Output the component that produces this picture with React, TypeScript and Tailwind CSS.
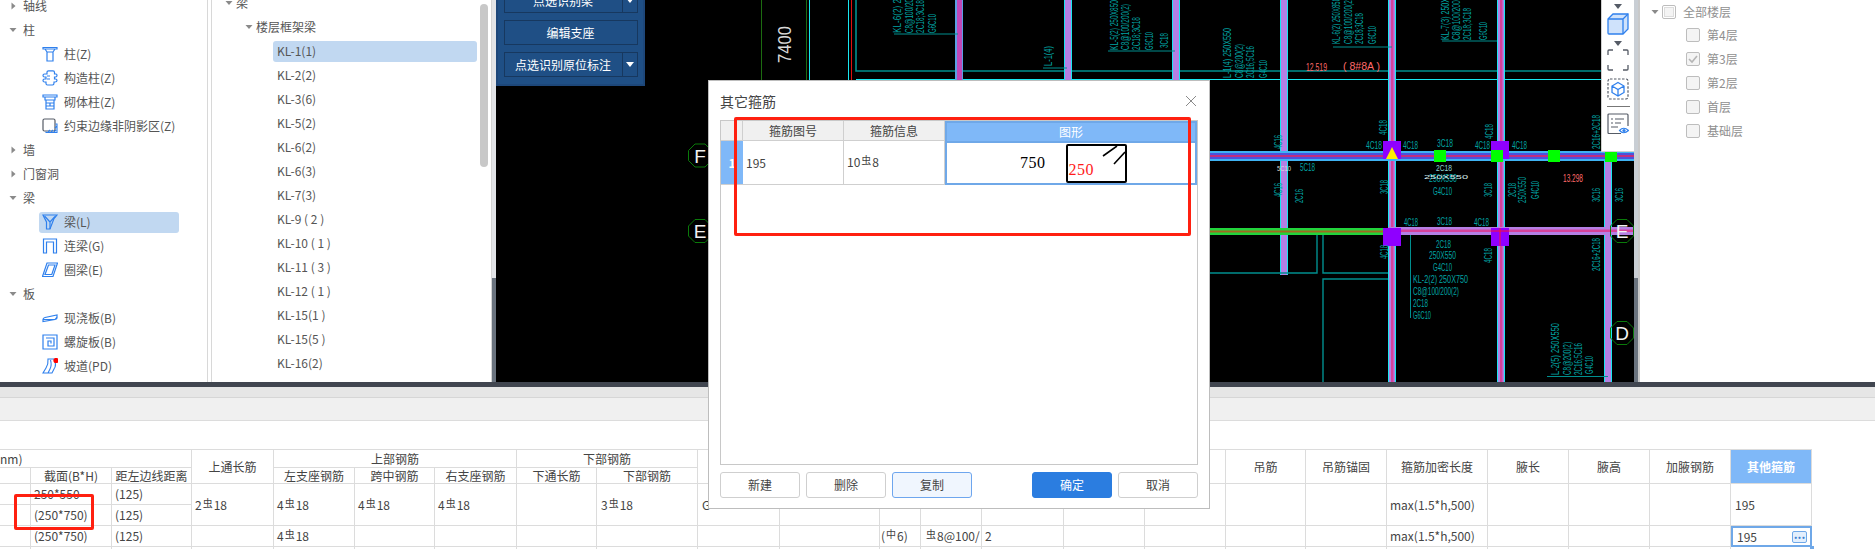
import type { ReactNode } from "react";

const TEAL = "#00a3a3";
const DARK_TEAL = "#008f8f";
const CYAN = "#19e6f0";

function Caret({ open }: { open?: boolean }) {
  return (
    <svg width="8" height="8" viewBox="0 0 8 8" className="shrink-0">
      {open ? (
        <path d="M0.5 2 H7.5 L4 6 Z" fill="#8a8a8a" />
      ) : (
        <path d="M2.5 0.5 L6.5 4 L2.5 7.5 Z" fill="#8a8a8a" />
      )}
    </svg>
  );
}

const ink = { fill: "none", stroke: "#2f80ed", strokeWidth: 1.2 };

function ColumnIcon() {
  return (
    <svg width="16" height="16" viewBox="0 0 16 16" {...ink}>
      <path d="M1 1.5 H15 V3 H1 Z M3 3 L5 6 H11 L13 3 M5 6 V15 H11 V6" />
    </svg>
  );
}
function GzzIcon() {
  return (
    <svg width="16" height="16" viewBox="0 0 16 16" {...ink}>
      <path d="M5 2 Q5 .8 6.5 .8 H11 Q12.5 .8 12.5 2.5 V4 H14 Q15 4 15 5.5 Q15 7 13.5 7 H12.5 V9 H13.5 Q15 9 15 10.5 Q15 12 13 12 H12 V13 Q12 15 10.5 15 H5.5 Q4 15 4 13.5 V12 H2.5 Q1 12 1 10.5 Q1 9 2.5 9 H4 V7 H2.5 Q1 7 1 5.5 Q1 4 2.5 4 H5 Z" />
      <path d="M5 9 H8 M5 6 H8" />
    </svg>
  );
}
function BrickIcon() {
  return (
    <svg width="16" height="16" viewBox="0 0 16 16" {...ink}>
      <path d="M1 1 H15 V3 H1 Z M3 3 V6 H13 V3 M4 6 V15 H12 V6 M4 9 H12 M4 12 H12 M8 9 V12" />
    </svg>
  );
}
function EdgeIcon() {
  return (
    <svg width="16" height="16" viewBox="0 0 16 16" fill="none">
      <rect x="1" y="1" width="12" height="12" rx="1.5" stroke="#555b66" strokeWidth="1.2" />
      <path d="M13.5 6 H15 V14.5 H4 V13.5 M6 14 L8 12 M9 14 L11 12 M12 14 L14 12 M13 10 L15 8" stroke="#2f80ed" strokeWidth="1.1" />
    </svg>
  );
}
function BeamIcon() {
  return (
    <svg width="16" height="16" viewBox="0 0 16 16" {...ink}>
      <path d="M1 1 H15 L12 4.5 L8 15 H4.5 V8 Z" />
      <path d="M2.5 2 L8 8 L13 2.5 M8 8 V15" />
    </svg>
  );
}
function LinkBeamIcon() {
  return (
    <svg width="16" height="16" viewBox="0 0 16 16" {...ink}>
      <path d="M1.5 15 V1 H14.5 V15 H11.5 V4 H4.5 V15 Z" />
    </svg>
  );
}
function RingBeamIcon() {
  return (
    <svg width="16" height="16" viewBox="0 0 16 16" {...ink}>
      <path d="M5 1 H15.5 L11 14.5 H.5 Z M6.5 3 H13 L9.8 12.5 H3 Z" />
    </svg>
  );
}
function SlabIcon() {
  return (
    <svg width="16" height="16" viewBox="0 0 16 16" {...ink}>
      <path d="M1 9.5 Q1 8 3 7.5 L15 5 V8 Q15 9 13 9.5 L1 11.5 Z M1 9.5 H13 L15 7" />
    </svg>
  );
}
function SpiralIcon() {
  return (
    <svg width="16" height="16" viewBox="0 0 16 16" {...ink}>
      <path d="M1 1 H15 V15 H1 Z M4 4 H12 V12 H6 V7 H9 V9.5" />
    </svg>
  );
}
function RampIcon() {
  return (
    <svg width="16" height="16" viewBox="0 0 16 16" fill="none">
      <path d="M6 1 H12 Q15 7 12 11 L10 15 H1 L4 10 Q6.5 6 6 1 Z M8.5 2 Q10 7 8 11 L6 15" stroke="#2f80ed" strokeWidth="1.1" />
      <circle cx="14" cy="2.5" r="2.6" fill="#ff0000" />
    </svg>
  );
}

function Group({ label, open }: { label: string; open?: boolean }) {
  return (
    <div className="flex h-6 items-center gap-[6px] pl-[9px]">
      <Caret open={open} />
      <span>{label}</span>
    </div>
  );
}

function Leaf({ icon, label, active }: { icon: ReactNode; label: string; active?: boolean }) {
  return (
    <div className="flex h-6 items-center pl-[39px]">
      <div
        className={
          "flex h-[21px] w-[140px] items-center gap-[6px] rounded-[3px] pl-[3px] " +
          (active ? "bg-[#c1d8f1]" : "")
        }
      >
        {icon}
        <span className="whitespace-nowrap">{label}</span>
      </div>
    </div>
  );
}

const beamNames = [
  "KL-2(2)",
  "KL-3(6)",
  "KL-5(2)",
  "KL-6(2)",
  "KL-6(3)",
  "KL-7(3)",
  "KL-9 ( 2 )",
  "KL-10 ( 1 )",
  "KL-11 ( 3 )",
  "KL-12 ( 1 )",
  "KL-15(1 )",
  "KL-15(5 )",
  "KL-16(2)",
];

function CategoryTree() {
  return (
    <div className="h-full w-[207px] shrink-0 overflow-hidden bg-white">
      <div className="-mt-[6px]">
        <Group label="轴线" />
        <Group label="柱" open />
        <Leaf icon={<ColumnIcon />} label="柱(Z)" />
        <Leaf icon={<GzzIcon />} label="构造柱(Z)" />
        <Leaf icon={<BrickIcon />} label="砌体柱(Z)" />
        <Leaf icon={<EdgeIcon />} label="约束边缘非阴影区(Z)" />
        <Group label="墙" />
        <Group label="门窗洞" />
        <Group label="梁" open />
        <Leaf icon={<BeamIcon />} label="梁(L)" active />
        <Leaf icon={<LinkBeamIcon />} label="连梁(G)" />
        <Leaf icon={<RingBeamIcon />} label="圈梁(E)" />
        <Group label="板" open />
        <Leaf icon={<SlabIcon />} label="现浇板(B)" />
        <Leaf icon={<SpiralIcon />} label="螺旋板(B)" />
        <Leaf icon={<RampIcon />} label="坡道(PD)" />
      </div>
    </div>
  );
}

function MemberTree() {
  return (
    <div className="relative h-full w-[280px] shrink-0 overflow-hidden border-r border-[#d4d4d4] bg-white">
      <div className="-mt-[9px]">
        <div className="flex h-6 items-center gap-[3px] pl-[13px]">
          <Caret open />
          <span>梁</span>
        </div>
        <div className="flex h-6 items-center gap-[3px] pl-[33px]">
          <Caret open />
          <span>楼层框架梁</span>
        </div>
        <div className="flex h-6 items-center pl-[61px]">
          <div className="flex h-[21px] w-[204px] items-center rounded-[3px] bg-[#c1d8f1] pl-[4px]">KL-1(1)</div>
        </div>
        {beamNames.map((name) => (
          <div key={name} className="flex h-6 items-center whitespace-pre pl-[65px]">
            {name}
          </div>
        ))}
      </div>
      {/* scrollbar thumb */}
      <div className="absolute left-[268px] top-[4px] h-[163px] w-[8px] rounded-[4px] bg-[#c8c8c8]" />
    </div>
  );
}

function Splitter({ light }: { light: string }) {
  return (
    <div className={"flex h-full w-[4px] shrink-0 flex-col justify-end " + light}>
      <div className="h-[104px] bg-[#6a737e]" />
    </div>
  );
}

type CadTextProps = { x: number; y: number; len: number; children: string; fill?: string; size?: number };

function V({ x, y, len, children, fill = TEAL, size = 11 }: CadTextProps) {
  return (
    <text
      transform={`translate(${x} ${y}) rotate(-90)`}
      textLength={len}
      lengthAdjust="spacingAndGlyphs"
      fontSize={size}
      fontFamily="'Liberation Sans', sans-serif"
      fill={fill}
    >
      {children}
    </text>
  );
}

function H({ x, y, len, children, fill = TEAL, size = 11 }: CadTextProps) {
  return (
    <text
      x={x}
      y={y}
      textLength={len}
      lengthAdjust="spacingAndGlyphs"
      fontSize={size}
      fontFamily="'Liberation Sans', sans-serif"
      fill={fill}
    >
      {children}
    </text>
  );
}

function Beam({ x, y1, y2, core }: { x: number; y1: number; y2: number; core?: boolean }) {
  return (
    <g>
      <rect x={x} y={y1} width="8" height={y2 - y1} fill={CYAN} />
      <rect x={x + 1} y={y1} width="6" height={y2 - y1} fill="#b47fe4" />
      {core ? <rect x={x + 3} y={y1} width="2.5" height={y2 - y1} fill="#d6429a" /> : null}
    </g>
  );
}

function Marker({ x, y, label }: { x: number; y: number; label: string }) {
  return (
    <g>
      <polygon
        points={`${x - 5},${y - 11.5} ${x + 5},${y - 11.5} ${x + 11.5},${y - 5} ${x + 11.5},${y + 5} ${x + 5},${y + 11.5} ${x - 5},${y + 11.5} ${x - 11.5},${y + 5} ${x - 11.5},${y - 5}`}
        fill="none"
        stroke="#0a7a0a"
      />
      <text x={x} y={y + 7} textAnchor="middle" fontSize="19" fontFamily="'Liberation Sans', sans-serif" fill="#f2f2f2">
        {label}
      </text>
    </g>
  );
}

function CadDrawing() {
  return (
    <svg className="absolute inset-0" width="1138" height="382" viewBox="496 0 1138 382">
      <rect x="496" y="0" width="1138" height="382" fill="#000" />
      <path d="M761.5 0 V80 M806.5 0 V80" stroke="#1c6b10" />
      <path d="M809.5 0 V80 M848.5 0 V80" stroke={CYAN} />
      <path d="M851.5 0 V80" stroke="#e01010" />
      <path d="M856 0 V71 H1601" stroke={DARK_TEAL} strokeWidth="1.6" fill="none" />
      <path d="M856 79.5 H1601" stroke={CYAN} />
      <text
        transform="translate(791 63) rotate(-90)"
        fontSize="18"
        textLength="37"
        lengthAdjust="spacingAndGlyphs"
        fontFamily="'Liberation Sans', sans-serif"
        fill="#d8d8d8"
      >
        7400
      </text>

      <rect x="955" y="0" width="8" height="80" fill="#5aa0e4" />
      <rect x="957" y="0" width="5" height="80" fill="#c046b8" />
      <Beam x={1064} y1={0} y2={80} />
      <Beam x={1172} y1={0} y2={80} />
      <Beam x={1280} y1={0} y2={275} />
      <Beam x={1388} y1={0} y2={382} core />
      <Beam x={1497} y1={0} y2={382} core />
      <Beam x={1604} y1={153} y2={382} />

      {/* rooms under the green beam */}
      <path d="M1210 273 H1317 V235 M1323 235 V273 H1388 M1323 382 V279 H1388" stroke={DARK_TEAL} strokeWidth="1.4" fill="none" />

      {/* floor beams */}
      <rect x="1210" y="151" width="424" height="10" fill="#3fb2f2" />
      <rect x="1210" y="153" width="424" height="6" fill="#4b52dc" />
      <rect x="1210" y="155" width="424" height="2" fill="#c02e80" />
      <rect x="1210" y="228" width="178" height="7" fill="#22d43c" />
      <rect x="1210" y="230.5" width="178" height="2" fill="#a06a20" />
      <rect x="1388" y="227" width="246" height="8" fill="#b47fe4" />
      <rect x="1388" y="229.5" width="246" height="2.5" fill="#d6429a" />

      <rect x="1383" y="141" width="18" height="18" fill="#8f00ff" />
      <path d="M1392 147 L1398 159 H1386 Z" fill="#ffee00" />
      <rect x="1383" y="228" width="18" height="18" fill="#8f00ff" />
      <rect x="1491" y="141" width="18" height="18" fill="#8f00ff" />
      <rect x="1491" y="228" width="18" height="18" fill="#8f00ff" />
      <path d="M1500 228 V246 M1491 231 H1509" stroke="#ff1030" />
      <rect x="1434" y="150" width="12" height="12" fill="#00ff00" />
      <rect x="1491" y="150" width="12" height="12" fill="#00ff00" />
      <rect x="1548" y="150" width="12" height="12" fill="#00ff00" />
      <rect x="1605" y="152" width="12" height="10" fill="#00ff00" />

      {/* leaders */}
      <path d="M1043 68 H1067 M1108 51 H1175 M1333 47 H1392 M1442 41 H1497 M894 34 H958 M1547 376.5 H1608 M1410.5 235 V318" stroke={DARK_TEAL} fill="none" />

      <V x={1052} y={66} len={20}>L-1(4)</V>
      <V x={1118} y={50} len={50}>KL-5(2) 250X850</V>
      <V x={1129} y={50} len={46}>C8@100/200(2)</V>
      <V x={1140} y={50} len={33}>2C18;3C18</V>
      <V x={1153} y={50} len={18}>G6C10</V>
      <V x={1168} y={48} len={15}>3C18</V>
      <V x={1231} y={78} len={50}>L-1(4) 250X550</V>
      <V x={1243} y={78} len={34}>C8@200(2)</V>
      <V x={1254} y={78} len={32}>2C16;5C16</V>
      <V x={1267} y={78} len={18}>G4C10</V>
      <V x={1340} y={44} len={46}>KL-6(2) 250X850</V>
      <V x={1352} y={44} len={46}>C8@100/200(2)</V>
      <V x={1363} y={44} len={31}>2C18;3C18</V>
      <V x={1376} y={44} len={18}>G6C10</V>
      <V x={1449} y={40} len={42}>KL-7(3) 250X</V>
      <V x={1460} y={40} len={42}>C8@100/200(</V>
      <V x={1471} y={40} len={32}>2C18;3C18</V>
      <V x={1487} y={40} len={18}>G6C10</V>
      <V x={901} y={33} len={34}>KL-6(2) 2</V>
      <V x={913} y={33} len={34}>C8@100/20</V>
      <V x={924} y={33} len={33}>2C18;3C18</V>
      <V x={936} y={33} len={19}>G6C10</V>

      <H x={1306} y={71} len={21} fill="#ff6a6a">12.519</H>
      <H x={1343} y={70} len={37} fill="#ff6a6a">( 8#8A )</H>
      <H x={1563} y={182} len={20} fill="#ff6a6a">13.298</H>

      <V x={1282} y={149} len={14}>4C16</V>
      <V x={1387} y={135} len={15}>4C18</V>
      <H x={1366} y={149} len={16}>4C18</H>
      <H x={1403} y={149} len={15}>4C18</H>
      <H x={1437} y={147} len={16}>3C18</H>
      <H x={1475} y={149} len={15}>4C18</H>
      <H x={1512} y={149} len={15}>4C18</H>
      <V x={1493} y={139} len={15}>4C18</V>
      <V x={1600} y={149} len={34}>2C16+2C18</V>
      <H x={1300} y={171} len={15}>5C18</H>
      <H x={1277} y={171} len={14} fill="#dddddd" size={8}>5C10</H>
      <H x={1436} y={171} len={16} fill="#8fd8d8" size={9}>2C18</H>
      <H x={1429} y={182} len={28}>250X550</H>
      <H x={1424} y={179} len={44} fill="#d8f0f0" size={6}>250X550</H>
      <H x={1433} y={195} len={19}>G4C10</H>
      <V x={1282} y={197} len={14}>4C16</V>
      <V x={1303} y={203} len={14}>2C16</V>
      <V x={1388} y={194} len={14}>3C18</V>
      <V x={1492} y={197} len={14}>3C18</V>
      <V x={1516} y={197} len={14}>2C18</V>
      <V x={1526} y={203} len={26}>250X550</V>
      <V x={1539} y={199} len={18}>G4C10</V>
      <V x={1600} y={202} len={14}>3C16</V>
      <V x={1623} y={202} len={14}>3C16</V>
      <H x={1404} y={226} len={14}>4C18</H>
      <H x={1437} y={225} len={15}>3C18</H>
      <H x={1474} y={226} len={15}>4C18</H>
      <V x={1388} y={259} len={14}>4C18</V>
      <V x={1492} y={263} len={15}>4C18</V>
      <V x={1600} y={271} len={33}>2C16+2C18</V>
      <H x={1436} y={248} len={15}>2C18</H>
      <H x={1429} y={259} len={27}>250X550</H>
      <H x={1433} y={271} len={19}>G4C10</H>
      <H x={1413} y={283} len={55}>KL-2(2) 250X750</H>
      <H x={1413} y={295} len={46}>C8@100/200(2)</H>
      <H x={1413} y={307} len={15}>2C18</H>
      <H x={1413} y={319} len={18}>G6C10</H>
      <V x={1559} y={375} len={52}>L-2(5) 250X550</V>
      <V x={1571} y={375} len={33}>C8@200(2)</V>
      <V x={1582} y={375} len={32}>2C16;5C16</V>
      <V x={1593} y={374} len={18}>G4C10</V>

      <Marker x={700} y={155.5} label="F" />
      <Marker x={700} y={231} label="E" />
      <Marker x={1622} y={231} label="E" />
      <Marker x={1622} y={333} label="D" />
    </svg>
  );
}

function TopCaret() {
  return (
    <svg width="8" height="5" viewBox="0 0 8 5" className="shrink-0">
      <path d="M0 0 H8 L4 5 Z" fill="#555b66" />
    </svg>
  );
}

function ViewToolbar() {
  return (
    <div className="absolute left-[1105px] top-0 flex h-[152px] w-[33px] flex-col items-center border-b border-l border-[#d0d0d0] bg-white pt-[4px]">
      <TopCaret />
      <svg width="22" height="22" viewBox="0 0 22 22" className="mt-[4px]">
        <path d="M1 6 L6 1 H21 V16 L16 21 H2 Q1 21 1 20 Z" fill="#cfe2fb" stroke="#2f80ed" strokeWidth="1.3" />
        <path d="M1 6 H16 V21 M16 6 L21 1" fill="none" stroke="#2f80ed" strokeWidth="1.3" />
      </svg>
      <div className="mt-[6px]">
        <TopCaret />
      </div>
      <svg width="22" height="22" viewBox="0 0 22 22" className="mt-[3px]" fill="none" stroke="#555b66" strokeWidth="1.3">
        <path d="M1 6 V2 Q1 1 2 1 H6 M16 1 H20 Q21 1 21 2 V6 M21 16 V20 Q21 21 20 21 H16 M6 21 H2 Q1 21 1 20 V16" />
      </svg>
      <svg width="22" height="22" viewBox="0 0 22 22" className="mt-[7px]" fill="none">
        <rect x="1" y="1" width="20" height="20" rx="2" stroke="#555b66" strokeWidth="1.2" strokeDasharray="2.5 1.5" />
        <path d="M11 4.5 L17 8 V14.5 L11 18 L5 14.5 V8 Z M5 8 L11 11.5 L17 8 M11 11.5 V18" stroke="#2f80ed" strokeWidth="1.3" />
      </svg>
      <div className="mt-[6px] h-px w-[23px] bg-[#777]" />
      <svg width="22" height="22" viewBox="0 0 22 22" className="mt-[6px]" fill="none">
        <path d="M14 20.5 H2 Q1 20.5 1 19.5 V2 Q1 1 2 1 H20 Q21 1 21 2 V13" stroke="#555b66" strokeWidth="1.2" />
        <path d="M4 6 H6 M8 6 H17 M4 10 H6 M8 10 H14 M4 14 H11" stroke="#555b66" strokeWidth="1.2" />
        <path d="M12.5 17.5 Q16.5 13 21.5 17.5 Q16.5 22 12.5 17.5 Z" fill="#fff" stroke="#2f80ed" strokeWidth="1.2" />
        <circle cx="17" cy="17.5" r="1.6" fill="#2f80ed" />
      </svg>
    </div>
  );
}

function ToolButton({ label, menu }: { label: string; menu?: boolean }) {
  return (
    <div className="flex h-[25px] w-[134px] shrink-0 border border-[#17385f] bg-[#1f4f85] text-white">
      <div className="flex flex-1 items-center justify-center">{label}</div>
      {menu ? (
        <div className="flex w-[15px] items-center justify-center border-l border-[#17385f]">
          <svg width="8" height="5" viewBox="0 0 8 5">
            <path d="M0 0 H8 L4 5 Z" fill="#fff" />
          </svg>
        </div>
      ) : null}
    </div>
  );
}

function ToolPanel() {
  return (
    <div className="absolute left-0 top-0 flex h-[86px] w-[149px] flex-col items-center justify-end gap-[7px] overflow-hidden border-b-2 border-l-2 border-r-2 border-[#1d477a] bg-[#1f4f85] pb-[7px]">
      <ToolButton label="点选识别梁" menu />
      <ToolButton label="编辑支座" />
      <ToolButton label="点选识别原位标注" menu />
    </div>
  );
}

function FloorCheck({ label, checked }: { label: string; checked?: boolean }) {
  return (
    <div className="flex h-6 items-center gap-[7px] pl-[46px]">
      <div className="flex h-[14px] w-[14px] items-center justify-center rounded-[2px] border border-[#bdbdbd] bg-[#f4f4f4]">
        {checked ? (
          <svg width="10" height="10" viewBox="0 0 10 10">
            <path d="M1 5 L4 8 L9 2" fill="none" stroke="#b5b5b5" strokeWidth="1.6" />
          </svg>
        ) : null}
      </div>
      <span>{label}</span>
    </div>
  );
}

function FloorTree() {
  return (
    <div className="h-full flex-1 border-l-2 border-[#c9c9c9] bg-white text-[#8f8f8f]">
      <div className="flex h-[23px] items-center pl-[11px]">
        <Caret open />
        <div className="ml-[3px] flex h-[14px] w-[14px] items-center justify-center rounded-[2px] border border-[#bdbdbd] bg-white">
          <div className="h-[10px] w-[10px] border border-[#dddddd] bg-[#f4f4f4]" />
        </div>
        <span className="ml-[7px]">全部楼层</span>
      </div>
      <FloorCheck label="第4层" />
      <FloorCheck label="第3层" checked />
      <FloorCheck label="第2层" />
      <FloorCheck label="首层" />
      <FloorCheck label="基础层" />
    </div>
  );
}

function Rebar() {
  return <span className="relative -top-[2px] mx-px text-[10px]">虫</span>;
}

function Cell({ className = "", children }: { className?: string; children?: ReactNode }) {
  return (
    <div className={"flex items-center overflow-hidden whitespace-nowrap border-b border-r border-[#dcdcdc] " + className}>
      {children}
    </div>
  );
}

function HeadCell({ className = "", children }: { className?: string; children?: ReactNode }) {
  return <Cell className={"justify-center " + className}>{children}</Cell>;
}

function Bar18({ count }: { count: number }) {
  return (
    <>
      {count}
      <Rebar />
      18
    </>
  );
}

function RebarTable() {
  return (
    <div className="grid w-[1812px] grid-cols-[31px_81px_80px_82px_81px_80px_82px_80px_101px_82px_100px_41px_61px_82px_81px_81px_80px_81px_101px_81px_81px_81px_81px] grid-rows-[18px_16px_21px_21px_21px_3px] border-t border-[#dcdcdc] text-[#444]">
      <Cell className="col-span-3">nm)</Cell>
      <HeadCell className="row-span-2">上通长筋</HeadCell>
      <HeadCell className="col-span-3">上部钢筋</HeadCell>
      <HeadCell className="col-span-2">下部钢筋</HeadCell>
      {[0, 1, 2, 3, 4, 5, 6].map((i) => (
        <Cell key={i} className="row-span-2" />
      ))}
      <HeadCell className="row-span-2">吊筋</HeadCell>
      <HeadCell className="row-span-2">吊筋锚固</HeadCell>
      <HeadCell className="row-span-2">箍筋加密长度</HeadCell>
      <HeadCell className="row-span-2">腋长</HeadCell>
      <HeadCell className="row-span-2">腋高</HeadCell>
      <HeadCell className="row-span-2">加腋钢筋</HeadCell>
      <HeadCell className="row-span-2 border-[#6fa8e8] bg-[#7fb8f8] font-bold text-white">其他箍筋</HeadCell>

      <Cell />
      <HeadCell>截面(B*H)</HeadCell>
      <HeadCell>距左边线距离</HeadCell>
      <HeadCell>左支座钢筋</HeadCell>
      <HeadCell>跨中钢筋</HeadCell>
      <HeadCell>右支座钢筋</HeadCell>
      <HeadCell>下通长筋</HeadCell>
      <HeadCell>下部钢筋</HeadCell>

      <Cell />
      <Cell className="pl-[3px]">250*550</Cell>
      <Cell className="pl-[3px]">(125)</Cell>
      <Cell className="row-span-2 pl-[3px]"><Bar18 count={2} /></Cell>
      <Cell className="row-span-2 pl-[3px]"><Bar18 count={4} /></Cell>
      <Cell className="row-span-2 pl-[3px]"><Bar18 count={4} /></Cell>
      <Cell className="row-span-2 pl-[3px]"><Bar18 count={4} /></Cell>
      <Cell className="row-span-2" />
      <Cell className="row-span-2 pl-[4px]"><Bar18 count={3} /></Cell>
      <Cell className="row-span-2 pl-[4px]">G</Cell>
      {[0, 1, 2, 3, 4, 5, 6, 7].map((i) => (
        <Cell key={i} className="row-span-2" />
      ))}
      <Cell className="row-span-2 pl-[3px]">max(1.5*h,500)</Cell>
      <Cell className="row-span-2" />
      <Cell className="row-span-2" />
      <Cell className="row-span-2" />
      <Cell className="row-span-2 pl-[4px]">195</Cell>

      <Cell />
      <Cell className="pl-[3px]">(250*750)</Cell>
      <Cell className="pl-[3px]">(125)</Cell>

      <Cell />
      <Cell className="pl-[3px]">(250*750)</Cell>
      <Cell className="pl-[3px]">(125)</Cell>
      <Cell />
      <Cell className="pl-[3px]"><Bar18 count={4} /></Cell>
      <Cell />
      <Cell />
      <Cell />
      <Cell />
      <Cell />
      <Cell />
      <Cell className="pl-[1px]">
        (<span className="relative -top-[2px] mx-px text-[10px]">中</span>6)
      </Cell>
      <Cell className="pl-[4px]">
        <Rebar />8@100/
      </Cell>
      <Cell className="pl-[3px]">2</Cell>
      <Cell />
      <Cell />
      <Cell />
      <Cell />
      <Cell className="pl-[3px]">max(1.5*h,500)</Cell>
      <Cell />
      <Cell />
      <Cell />
      <div className="relative flex items-center justify-between border-2 border-[#6fa8e8] pl-[4px] pr-[3px]">
        195
        <div className="flex h-[12px] w-[15px] items-center justify-center rounded-[2px] border border-[#6fa8e8] bg-[#e3effd] pb-[5px] font-bold leading-none text-[#3b7fd0]">
          ...
        </div>
        <div className="absolute -bottom-[5px] -right-[4px] h-[4px] w-[4px] bg-[#6fa8e8]" />
      </div>

      {Array.from({ length: 23 }, (_, i) => (
        <div key={i} className="border-r border-[#dcdcdc]" />
      ))}
    </div>
  );
}

function DialogButton({ label, kind }: { label: string; kind?: "primary" | "hover" }) {
  const tone =
    kind === "primary"
      ? "border-[#2b7de0] bg-[#2b7de0] text-white"
      : kind === "hover"
        ? "border-[#6ea6ee] bg-[#f0f6fe] text-[#444]"
        : "border-[#cfcfcf] bg-white text-[#444]";
  return (
    <div className={"flex h-[26px] w-[80px] items-center justify-center rounded-[3px] border " + tone}>{label}</div>
  );
}

function StirrupDialog() {
  return (
    <div className="absolute left-[708px] top-[80px] flex h-[429px] w-[502px] flex-col border border-[#bdbdbd] bg-white px-[11px] text-[#444]">
      <div className="flex h-[39px] shrink-0 items-center justify-between">
        <span className="text-[14px]">其它箍筋</span>
        <svg width="12" height="12" viewBox="0 0 12 12" className="mr-[1px]">
          <path d="M1 1 L11 11 M11 1 L1 11" stroke="#8a8a8a" strokeWidth="1" />
        </svg>
      </div>
      <div className="h-[345px] w-[478px] border border-[#c8c8c8]">
        <div className="grid grid-cols-[22px_101px_101px_252px] grid-rows-[20px_44px]">
          <div className="border-b border-r border-[#cfcfcf] bg-[#f0f0f0]" />
          <div className="flex items-center justify-center border-b border-r border-[#cfcfcf] bg-[#f0f0f0]">箍筋图号</div>
          <div className="flex items-center justify-center border-b border-r border-[#cfcfcf] bg-[#f0f0f0]">箍筋信息</div>
          <div className="flex items-center justify-center border-2 border-b-0 border-[#6fa8e8] bg-[#7fb8f8] text-white">图形</div>
          <div className="flex items-center justify-center border-b border-[#cfcfcf] bg-[#7fb8f8] font-bold text-white">1</div>
          <div className="flex items-center border-b border-r border-[#cfcfcf] pl-[3px]">195</div>
          <div className="flex items-center border-b border-r border-[#cfcfcf] pl-[3px] pb-px">
            10
            <Rebar />8
          </div>
          <div className="flex items-center border-2 border-[#6fa8e8] pl-[73px] font-['Liberation_Serif',serif] text-black">
            <span className="text-[16px] tracking-[0.5px]">750</span>
            <div className="relative ml-[20px] h-[39px] w-[61px] rounded-[2px] border-2 border-black">
              <span className="absolute bottom-[3px] left-[1px] text-[16px] tracking-[0.5px] text-[#ff1a1a]">250</span>
              <svg className="absolute left-0 top-0" width="57" height="35" viewBox="0 0 57 35">
                <path d="M35 10 L49 0 M46 18 L57 6" stroke="#000" strokeWidth="1.6" />
              </svg>
            </div>
          </div>
        </div>
      </div>
      <div className="mt-[7px] flex gap-[6px]">
        <DialogButton label="新建" />
        <DialogButton label="删除" />
        <DialogButton label="复制" kind="hover" />
        <div className="w-[48px]" />
        <DialogButton label="确定" kind="primary" />
        <DialogButton label="取消" />
      </div>
    </div>
  );
}

export default function App() {
  return (
    <div className="relative flex h-[549px] w-[1875px] flex-col overflow-hidden bg-white font-['Noto_Sans_CJK_SC','Liberation_Sans',sans-serif] text-[12px] leading-[16px] text-[#555]">
      <div className="flex h-[382px] shrink-0">
        <CategoryTree />
        <div className="h-full w-[5px] shrink-0 border-x border-[#d8d8d8] bg-white" />
        <MemberTree />
        <Splitter light="bg-[#e2e4e7]" />
        <div className="relative h-full w-[1138px] shrink-0 overflow-hidden bg-black">
          <CadDrawing />
          <ToolPanel />
          <ViewToolbar />
        </div>
        <Splitter light="bg-[#c9ced4]" />
        <FloorTree />
      </div>
      <div className="h-[5px] shrink-0 bg-[#414650]" />
      <div className="h-[11px] shrink-0 border-b border-[#d6d6d6] bg-[#e6e6e6]" />
      <div className="h-[23px] shrink-0 border-b border-[#dcdcdc] bg-[#f0f0f0]" />
      <div className="h-[28px] shrink-0" />
      <RebarTable />

      <StirrupDialog />
      <div className="absolute left-[734px] top-[117px] h-[119px] w-[457px] rounded-[2px] border-[3px] border-[#ff2010]" />
      <div className="absolute left-[14px] top-[494px] h-[36px] w-[80px] rounded-[2px] border-[3px] border-[#ff2010]" />
    </div>
  );
}
